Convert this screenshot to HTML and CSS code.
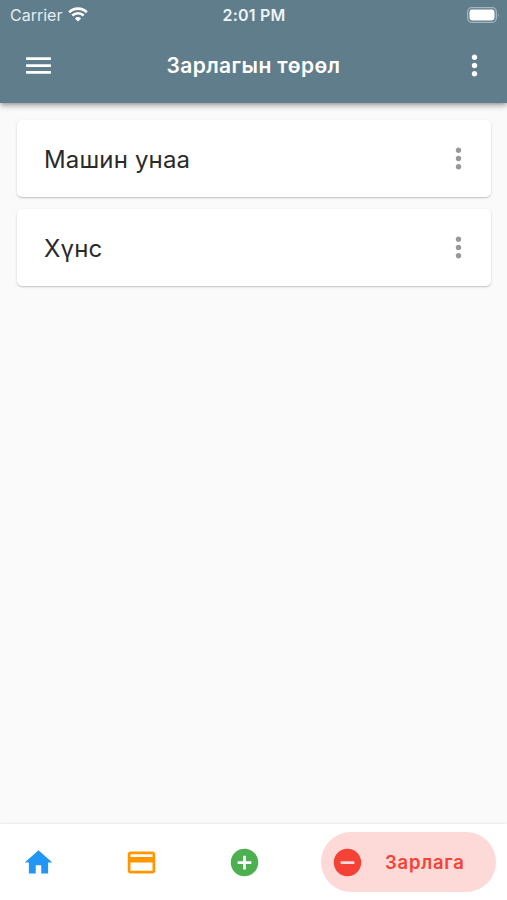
FILE: index.html
```
<!DOCTYPE html>
<html lang="mn">
  <head>
    <meta charset="utf-8">
    <title>Зарлагын төрөл</title>
    <link rel="stylesheet" href="styles.css">
  </head>
  <body>
    <header class="header">
      <div class="status-bar">
        <div class="carrier">
          <span>Carrier</span>
          <svg class="wifi" viewBox="0 0 20 15">
            <path d="M1.2 5.2a12.7 12.7 0 0 1 17.6 0" />
            <path d="M4.3 8.5a8.2 8.2 0 0 1 11.4 0" />
            <path class="wifi-dot" d="M10 14.6L6.9 11.5a4.5 4.5 0 0 1 6.2 0z" />
          </svg>
        </div>
        <span class="time">2:01 PM</span>
        <svg class="battery" viewBox="0 0 33 16">
          <rect class="battery-case" x=".7" y=".7" width="28.6" height="14.6" rx="4" />
          <rect class="battery-fill" x="2.5" y="2.5" width="25" height="11" rx="2.4" />
          <path class="battery-tip" d="M30.8 5.7q1.8 2.3 0 4.6z" />
        </svg>
      </div>
      <div class="toolbar">
        <svg class="icon" viewBox="0 0 24 24"><path d="M3 18h18v-2H3v2zm0-5h18v-2H3v2zm0-7v2h18V6H3z" /></svg>
        <h1 class="title">Зарлагын төрөл</h1>
        <svg class="icon" viewBox="0 0 24 24"><path d="M12 8c1.1 0 2-.9 2-2s-.9-2-2-2-2 .9-2 2 .9 2 2 2zm0 2c-1.1 0-2 .9-2 2s.9 2 2 2 2-.9 2-2-.9-2-2-2zm0 6c-1.1 0-2 .9-2 2s.9 2 2 2 2-.9 2-2-.9-2-2-2z" /></svg>
      </div>
    </header>

    <main class="list">
      <div class="card">
        <span class="name">Машин унаа</span>
        <svg class="icon more" viewBox="0 0 24 24"><path d="M12 8c1.1 0 2-.9 2-2s-.9-2-2-2-2 .9-2 2 .9 2 2 2zm0 2c-1.1 0-2 .9-2 2s.9 2 2 2 2-.9 2-2-.9-2-2-2zm0 6c-1.1 0-2 .9-2 2s.9 2 2 2 2-.9 2-2-.9-2-2-2z" /></svg>
      </div>
      <div class="card">
        <span class="name">Хүнс</span>
        <svg class="icon more" viewBox="0 0 24 24"><path d="M12 8c1.1 0 2-.9 2-2s-.9-2-2-2-2 .9-2 2 .9 2 2 2zm0 2c-1.1 0-2 .9-2 2s.9 2 2 2 2-.9 2-2-.9-2-2-2zm0 6c-1.1 0-2 .9-2 2s.9 2 2 2 2-.9 2-2-.9-2-2-2z" /></svg>
      </div>
    </main>

    <nav class="bottom-nav">
      <svg class="icon home" viewBox="0 0 24 24"><path d="M10 20v-6h4v6h5v-8h3L12 3 2 12h3v8z" /></svg>
      <svg class="icon account" viewBox="0 0 24 24"><path d="M20 4H4c-1.11 0-1.99.89-1.99 2L2 18c0 1.11.89 2 2 2h16c1.11 0 2-.89 2-2V6c0-1.11-.89-2-2-2zm0 14H4v-6h16v6zm0-10H4V6h16v2z" /></svg>
      <svg class="icon income" viewBox="0 0 24 24"><path d="M12 2C6.48 2 2 6.48 2 12s4.48 10 10 10 10-4.48 10-10S17.52 2 12 2zm5 11h-4v4h-2v-4H7v-2h4V7h2v4h4v2z" /></svg>
      <div class="active">
        <svg class="icon" viewBox="0 0 24 24"><path d="M12 2C6.48 2 2 6.48 2 12s4.48 10 10 10 10-4.48 10-10S17.52 2 12 2zm5 11H7v-2h10v2z" /></svg>
        <span class="label">Зарлага</span>
      </div>
    </nav>
  </body>
</html>
```
FILE: styles.css
```
* {
  box-sizing: border-box;
}

body {
  margin: 0;
  height: 100vh;
  display: flex;
  flex-direction: column;
  overflow: hidden;
  background-color: #fafafa;
  font-family: Inter, Roboto, "Liberation Sans", sans-serif;
}

.icon {
  display: block;
  flex: none;
  width: 33px;
  height: 33px;
  fill: currentColor;
}

.header {
  height: 103px;
  flex: none;
  background-color: #607d8b;
  color: white;
  box-shadow: 0 2px 4px -1px rgba(0, 0, 0, 0.25),
    0 4px 5px rgba(0, 0, 0, 0.14),
    0 1px 8px rgba(0, 0, 0, 0.1);
}

.status-bar {
  height: 29px;
  padding: 0 7px 0 10px;
  display: grid;
  grid-template-columns: 1fr auto 1fr;
  align-items: center;
  font-size: 16px;
  line-height: 31px;
}

.carrier {
  display: flex;
  align-items: center;
  gap: 6px;
  color: #e6ecef;
}

.wifi {
  width: 20px;
  height: 15px;
  margin-bottom: 2px;
  fill: none;
  stroke: white;
  stroke-width: 2.6;
}

.wifi-dot {
  fill: white;
  stroke: none;
}

.time {
  margin-right: 2px;
  font-weight: 600;
  letter-spacing: 0.2px;
  color: #eef3f5;
}

.battery {
  justify-self: end;
  width: 33px;
  height: 16px;
  margin-bottom: 2px;
}

.battery-case {
  fill: none;
  stroke: #a5b6be;
  stroke-width: 1.3;
}

.battery-fill {
  fill: white;
}

.battery-tip {
  fill: #a5b6be;
}

.toolbar {
  height: 74px;
  padding: 0 16px 1px 22px;
  display: flex;
  align-items: center;
  justify-content: space-between;
}

.title {
  margin: 0 6px 0 0;
  font-size: 21px;
  font-weight: 600;
  letter-spacing: 0.4px;
}

.list {
  flex: 1;
  padding: 17px 16px 0 17px;
  display: flex;
  flex-direction: column;
  gap: 12px;
}

.card {
  height: 77px;
  padding: 0 16px 0 27px;
  display: flex;
  align-items: center;
  justify-content: space-between;
  background-color: white;
  border-radius: 5px;
  box-shadow: 0 1px 1px rgba(0, 0, 0, 0.12), 0 1px 3px rgba(0, 0, 0, 0.12);
}

.name {
  padding-top: 1px;
  font-size: 24px;
  letter-spacing: 0.15px;
  color: #2a2a2a;
}

.more {
  color: #989898;
}

.bottom-nav {
  height: 76px;
  flex: none;
  padding: 0 11px 0 22px;
  display: flex;
  align-items: center;
  background-color: white;
  box-shadow: 0 0 3px rgba(0, 0, 0, 0.12);
}

.home {
  color: #2196f3;
}

.account {
  margin-left: 70px;
  color: #ff9800;
}

.income {
  margin-left: 70px;
  color: #4caf50;
}

.active {
  width: 175px;
  height: 60px;
  margin-left: auto;
  padding-left: 10px;
  display: flex;
  align-items: center;
  gap: 21px;
  border-radius: 30px;
  background-color: #fdd9d7;
  color: #f44336;
}

.label {
  padding-bottom: 1px;
  font-size: 18.5px;
  font-weight: 600;
  letter-spacing: 0.75px;
}
```
